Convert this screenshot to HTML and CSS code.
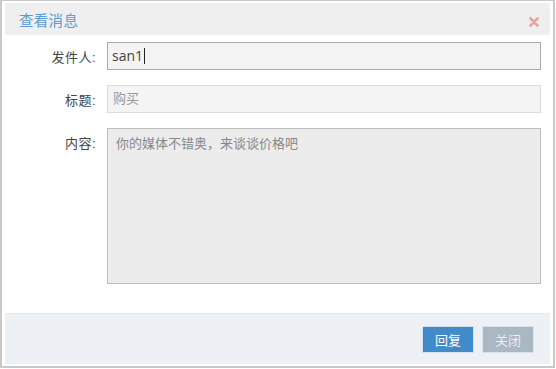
FILE: index.html
```html
<!DOCTYPE html>
<html lang="zh-CN">
<head>
    <meta charset="UTF-8">
    <title>查看消息</title>
    <link rel="stylesheet" href="styles.css">
</head>
<body>
    <div class="dialog">
        <div class="dialog-header">
            <span class="dialog-title">查看消息</span>
            <svg class="dialog-close" width="10" height="10" viewBox="0 0 10 10">
                <path d="M1.5 1.5 L8.5 8.5 M8.5 1.5 L1.5 8.5" stroke="#eaa29c" stroke-width="2.6" stroke-linecap="round"/>
            </svg>
        </div>

        <div class="dialog-body">
            <div class="form-row">
                <label class="form-label">发件人:</label>
                <div class="form-input focused">san1<span class="caret"></span></div>
            </div>
            <div class="form-row">
                <label class="form-label">标题:</label>
                <div class="form-input readonly">购买</div>
            </div>
            <div class="form-row top">
                <label class="form-label">内容:</label>
                <div class="form-textarea">你的媒体不错奥，来谈谈价格吧</div>
            </div>
        </div>

        <div class="dialog-footer">
            <button class="btn btn-primary">回复</button>
            <button class="btn btn-muted">关闭</button>
        </div>
    </div>
</body>
</html>
```

FILE: styles.css
```css
* {
    margin: 0;
    padding: 0;
    box-sizing: border-box;
}

body {
    font-family: "Liberation Sans", "Noto Sans CJK SC", sans-serif;
    font-size: 13px;
    color: #333;
    background: #fff;
}

.dialog {
    width: 555px;
    height: 368px;
    border: 2px solid #c9c9c9;
    border-top-width: 1px;
    padding: 2px 3px 2px 3px;
    background: #fff;
    display: flex;
    flex-direction: column;
}

.dialog-header {
    height: 32px;
    background: #efefef;
    display: flex;
    align-items: center;
    justify-content: space-between;
    padding: 0 11px 0 14px;
}

.dialog-title {
    font-size: 14.5px;
    color: #5b9bd1;
    letter-spacing: 0.3px;
}

.dialog-close {
    margin-top: 5px;
}

.dialog-body {
    flex: 1;
    padding: 7px 9px 0 0;
}

.form-row {
    display: flex;
    align-items: center;
    gap: 11px;
    margin-bottom: 15px;
}

.form-row.top {
    align-items: flex-start;
    margin-top: 2px;
}

.form-label {
    width: 91px;
    text-align: right;
    color: #444;
    letter-spacing: 0.5px;
}

.form-row.top .form-label {
    padding-top: 5px;
}

.form-input {
    flex: 1;
    height: 28px;
    line-height: 26px;
    padding: 0 5px;
    background: #f4f4f4;
    border: 1px solid #dcdcdc;
    color: #999;
}

.form-input.focused {
    border-color: #a9a9a9;
    color: #444;
    font-family: "Open Sans", sans-serif;
    font-size: 14px;
    padding-left: 4px;
}

.caret {
    display: inline-block;
    width: 1px;
    height: 16px;
    background: #222;
    vertical-align: -3px;
    margin-left: 1px;
}

.form-textarea {
    flex: 1;
    height: 156px;
    padding: 4px 8px;
    background: #ececec;
    border: 1px solid #bdbdbd;
    color: #888;
}

.dialog-footer {
    height: 51px;
    background: #edf1f6;
    border-top: 1px solid #e6e9ee;
    display: flex;
    align-items: center;
    justify-content: flex-end;
    gap: 8px;
    padding: 0 16px 0 0;
}

.btn {
    width: 52px;
    height: 27px;
    border: 1px solid #d6e2ee;
    color: #fff;
    font-family: inherit;
    font-size: 13px;
    cursor: pointer;
}

.btn-primary {
    background: #418bcb;
}

.btn-muted {
    background: #a9b8c3;
    color: #e8edf1;
}
```
